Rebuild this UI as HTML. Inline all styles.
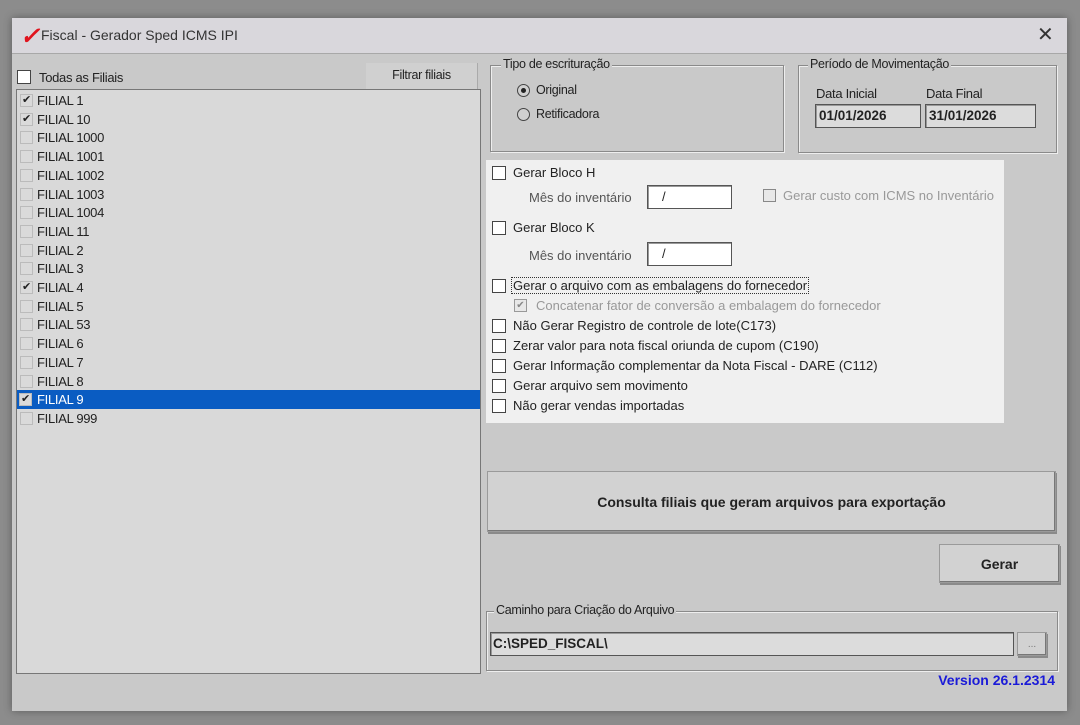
<!DOCTYPE html>
<html><head><meta charset="utf-8"><style>
*{margin:0;padding:0;box-sizing:border-box}
body{width:1080px;height:725px;background:#8c8c8c;font-family:"Liberation Sans",sans-serif;font-size:13px;color:#222;position:relative;overflow:hidden}
.a{position:absolute}
.win{left:12px;top:18px;width:1055px;height:693px;background:#c9c9c9;box-shadow:0 0 8px rgba(0,0,0,.35)}
.title{left:12px;top:18px;width:1055px;height:36px;background:#d9d7dc;border-bottom:1px solid #a8a8a8}
.cb{width:14px;height:14px;border:1.5px solid #444;background:#fff}
.cbs{width:13px;height:13px;border:1px solid #999;background:#e8e8e8}
.grp{border:1px solid #8a8a8a;box-shadow:inset 1px 1px 0 #eee,1px 1px 0 #eee}
.lg{background:#c9c9c9;padding:0 2px;font-size:12.5px;letter-spacing:-0.3px}
.btn{background:#d2d2d2;border:1px solid #9a9a9a;box-shadow:inset -1px -1px 0 #777,1px 2px 0 #8a8a8a;text-align:center;font-weight:bold}
.tb{background:#f6f6f6;border:1px solid #555;box-shadow:inset 1px 1px 0 #999}
.row{left:18px;width:462px;height:19px;line-height:19px;font-size:13px;letter-spacing:-0.3px}
.row span.c{position:absolute;left:2px;top:3px;width:13px;height:13px;border:1px solid #bbb;background:#dadada;font-size:11px;line-height:11px;text-align:center}
.row span.t{position:absolute;left:19px}
.rd{width:13px;height:13px;border:1.5px solid #444;border-radius:50%;background:#d0d0d0}
.rd.on::after{content:"";position:absolute;left:2.5px;top:2.5px;width:5px;height:5px;border-radius:50%;background:#222}
</style></head><body>
<div class="a win"></div>
<div class="a title"></div>
<div class="a" style="left:20px;top:22px;color:#e0141e;font-size:24px;font-weight:bold;font-style:italic">✓</div>
<div class="a" style="left:41px;top:27px;font-size:14px;color:#333">Fiscal - Gerador Sped ICMS IPI</div>
<div class="a" style="left:1037px;top:22px;font-size:20px;color:#333">✕</div>

<div class="a cb" style="left:17px;top:70px"></div>
<div class="a" style="left:39px;top:70px;letter-spacing:-0.3px">Todas as Filiais</div>
<div class="a" style="left:366px;top:63px;width:112px;height:26px;line-height:25px;background:#d0d0d0;text-align:center;font-size:12.5px;letter-spacing:-0.3px;border-right:1px solid #aaa">Filtrar filiais</div>
<div class="a" style="left:16px;top:89px;width:465px;height:585px;background:#d9d9d9;border:1px solid #777"></div>

<div class="a row" style="top:91px"><span class="c">✔</span><span class="t">FILIAL 1</span></div>
<div class="a row" style="top:109.7px"><span class="c">✔</span><span class="t">FILIAL 10</span></div>
<div class="a row" style="top:128.4px"><span class="c"></span><span class="t">FILIAL 1000</span></div>
<div class="a row" style="top:147.1px"><span class="c"></span><span class="t">FILIAL 1001</span></div>
<div class="a row" style="top:165.8px"><span class="c"></span><span class="t">FILIAL 1002</span></div>
<div class="a row" style="top:184.5px"><span class="c"></span><span class="t">FILIAL 1003</span></div>
<div class="a row" style="top:203.2px"><span class="c"></span><span class="t">FILIAL 1004</span></div>
<div class="a row" style="top:221.9px"><span class="c"></span><span class="t">FILIAL 11</span></div>
<div class="a row" style="top:240.6px"><span class="c"></span><span class="t">FILIAL 2</span></div>
<div class="a row" style="top:259.3px"><span class="c"></span><span class="t">FILIAL 3</span></div>
<div class="a row" style="top:278px"><span class="c">✔</span><span class="t">FILIAL 4</span></div>
<div class="a row" style="top:296.7px"><span class="c"></span><span class="t">FILIAL 5</span></div>
<div class="a row" style="top:315.4px"><span class="c"></span><span class="t">FILIAL 53</span></div>
<div class="a row" style="top:334.1px"><span class="c"></span><span class="t">FILIAL 6</span></div>
<div class="a row" style="top:352.8px"><span class="c"></span><span class="t">FILIAL 7</span></div>
<div class="a row" style="top:371.5px"><span class="c"></span><span class="t">FILIAL 8</span></div>
<div class="a row" style="top:390.2px;background:#0a5cc2;color:#fff;left:17px;width:463px"><span class="c" style="color:#222">✔</span><span class="t" style="left:20px">FILIAL 9</span></div>
<div class="a row" style="top:408.9px"><span class="c"></span><span class="t">FILIAL 999</span></div>

<div class="a grp" style="left:490px;top:65px;width:294px;height:87px"></div>
<div class="a lg" style="left:501px;top:57px">Tipo de escrituração</div>
<div class="a rd on" style="left:517px;top:84px"></div><div class="a" style="left:536px;top:83px;font-size:12.5px;letter-spacing:-0.3px">Original</div>
<div class="a rd" style="left:517px;top:108px"></div><div class="a" style="left:536px;top:107px;font-size:12.5px;letter-spacing:-0.3px">Retificadora</div>

<div class="a grp" style="left:798px;top:65px;width:259px;height:88px"></div>
<div class="a lg" style="left:808px;top:57px">Período de Movimentação</div>
<div class="a" style="left:816px;top:86px;letter-spacing:-0.3px">Data Inicial</div>
<div class="a" style="left:926px;top:86px;letter-spacing:-0.3px">Data Final</div>
<div class="a tb" style="left:815px;top:104px;width:106px;height:24px;background:#dcdcdc;padding:3px 3px;font-weight:bold;font-size:13.5px">01/01/2026</div>
<div class="a tb" style="left:925px;top:104px;width:111px;height:24px;background:#dcdcdc;padding:3px 3px;font-weight:bold;font-size:13.5px">31/01/2026</div>

<div class="a" style="left:486px;top:160px;width:518px;height:263px;background:#f0f0f0"></div>
<div class="a cb" style="left:492px;top:166px"></div><div class="a" style="left:513px;top:165px">Gerar Bloco H</div>
<div class="a" style="left:529px;top:190px;color:#555">Mês do inventário</div>
<div class="a tb" style="left:647px;top:185px;width:85px;height:24px;background:#fff;padding:3px 14px">/</div>
<div class="a cbs" style="left:763px;top:189px;border:1.5px solid #888"></div><div class="a" style="left:783px;top:188px;color:#999">Gerar custo com ICMS no Inventário</div>
<div class="a cb" style="left:492px;top:221px"></div><div class="a" style="left:513px;top:220px">Gerar Bloco K</div>
<div class="a" style="left:529px;top:248px;color:#555">Mês do inventário</div>
<div class="a tb" style="left:647px;top:242px;width:85px;height:24px;background:#fff;padding:3px 14px">/</div>
<div class="a cb" style="left:492px;top:279px"></div><div class="a" style="left:512px;top:278px;outline:1px dotted #333;padding:0 1px">Gerar o arquivo com as embalagens do fornecedor</div>
<div class="a cbs" style="left:514px;top:299px;font-size:10px;line-height:11px;text-align:center;color:#888">✔</div><div class="a" style="left:536px;top:298px;color:#999">Concatenar fator de conversão a embalagem do fornecedor</div>
<div class="a cb" style="left:492px;top:319px"></div><div class="a" style="left:513px;top:318px">Não Gerar Registro de controle de lote(C173)</div>
<div class="a cb" style="left:492px;top:339px"></div><div class="a" style="left:513px;top:338px">Zerar valor para nota fiscal oriunda de cupom (C190)</div>
<div class="a cb" style="left:492px;top:359px"></div><div class="a" style="left:513px;top:358px">Gerar Informação complementar da Nota Fiscal - DARE (C112)</div>
<div class="a cb" style="left:492px;top:379px"></div><div class="a" style="left:513px;top:378px">Gerar arquivo sem movimento</div>
<div class="a cb" style="left:492px;top:399px"></div><div class="a" style="left:513px;top:398px">Não gerar vendas importadas</div>

<div class="a btn" style="left:487px;top:471px;width:569px;height:61px;line-height:60px;font-size:14px">Consulta filiais que geram arquivos para exportação</div>
<div class="a btn" style="left:939px;top:544px;width:121px;height:39px;line-height:38px;font-size:14px">Gerar</div>

<div class="a grp" style="left:486px;top:611px;width:572px;height:60px"></div>
<div class="a lg" style="left:494px;top:603px">Caminho para Criação do Arquivo</div>
<div class="a tb" style="left:490px;top:632px;width:524px;height:24px;background:#dcdcdc;padding:3px 2px;font-weight:bold;font-size:13.5px">C:\SPED_FISCAL\</div>
<div class="a btn" style="left:1017px;top:632px;width:30px;height:24px;font-weight:normal;font-size:10px;line-height:24px;color:#777">...</div>
<div class="a" style="left:900px;top:672px;width:155px;text-align:right;color:#1a1ad8;font-weight:bold;font-size:14px">Version 26.1.2314</div>
</body></html>
